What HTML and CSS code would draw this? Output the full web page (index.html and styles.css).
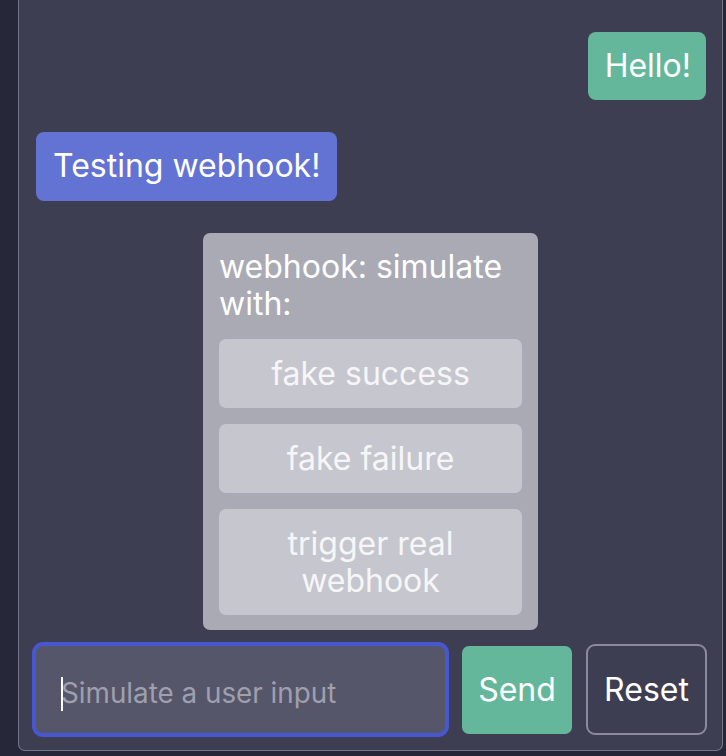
FILE: index.html
```html
<!DOCTYPE html>
<html lang="en">
<head>
<meta charset="utf-8">
<title>Webhook chat simulator</title>
<link rel="stylesheet" href="styles.css">
</head>
<body>
<div class="app">
  <div class="sidebar"></div>
  <section class="panel">
    <div class="messages">
      <div class="bubble user">Hello!</div>
      <div class="bubble bot">Testing webhook!</div>
      <div class="card">
        <div class="card-title">webhook: simulate with:</div>
        <div class="card-actions">
          <button class="action">fake success</button>
          <button class="action">fake failure</button>
          <button class="action">trigger real webhook</button>
        </div>
      </div>
    </div>
    <div class="composer">
      <label class="input-wrap">
        <input class="input" type="text" placeholder="Simulate a user input">
        <span class="caret"></span>
      </label>
      <button class="btn send">Send</button>
      <button class="btn reset">Reset</button>
    </div>
  </section>
</div>
</body>
</html>
```
FILE: styles.css
```css
* { box-sizing: border-box; }
html, body {
  margin: 0;
  height: 756px;
  background: #27273a;
  font-family: Inter, "Noto Sans", sans-serif;
  overflow: hidden;
}
.app {
  display: flex;
  height: 756px;
  align-items: flex-start;
}
.sidebar {
  width: 18px;
  flex: none;
}
.panel {
  width: 705px;
  height: 751px;
  flex: none;
  background: #3e3e52;
  border: 1px solid #76768a;
  border-top: none;
  border-radius: 0 0 7px 7px;
  display: flex;
  flex-direction: column;
  justify-content: flex-end;
}
.messages {
  display: flex;
  flex-direction: column;
  gap: 32px;
  padding: 0 16px 12px 17px;
}
.bubble {
  font-size: 32px;
  line-height: 48px;
  color: #ffffff;
  padding: 10px 17px 10px 18px;
  border-radius: 8px;
}
.bubble.user {
  align-self: flex-end;
  background: #64b79b;
  padding: 10px 15px 10px 17px;
}
.bubble.bot {
  align-self: flex-start;
  background: #6373d3;
  padding: 10px 17px 11px 17px;
}
.card {
  align-self: center;
  width: 335px;
  background: #aaaab4;
  border-radius: 7px;
  padding: 15px 16px 15px;
  margin-left: -1px;
}
.card-title {
  font-size: 32px;
  line-height: 37px;
  color: #ffffff;
  margin-bottom: 17px;
}
.card-actions {
  display: flex;
  flex-direction: column;
  gap: 16px;
}
.action {
  font-family: inherit;
  font-size: 32px;
  line-height: 37px;
  color: #f6f6f8;
  background: #c6c6ce;
  border: none;
  border-radius: 7px;
  padding: 16px 20px;
  text-align: center;
}
.composer {
  display: flex;
  align-items: center;
  gap: 13px;
  padding: 0 15px 13px 13px;
}
.input-wrap {
  position: relative;
  display: block;
  width: 417px;
  height: 95px;
  flex: none;
}
.input {
  width: 100%;
  height: 100%;
  font-family: inherit;
  font-size: 27.8px;
  color: #ffffff;
  background: #56566b;
  border: 4px solid #4757cf;
  border-radius: 11px;
  padding: 7px 20px 0 25px;
  outline: none;
}
.input::placeholder {
  color: #9f9fad;
}
.caret {
  position: absolute;
  left: 29px;
  top: 35px;
  width: 2px;
  height: 34px;
  background: #ffffff;
}
.btn {
  font-family: inherit;
  font-size: 32px;
  color: #ffffff;
  flex: none;
  padding: 0;
}
.send {
  width: 110px;
  height: 88px;
  background: #64b79b;
  border: none;
  border-radius: 7px;
}
.reset {
  width: 121px;
  height: 91px;
  background: transparent;
  border: 2px solid #8b8b9b;
  border-radius: 9px;
  margin-left: 1px;
}
```
